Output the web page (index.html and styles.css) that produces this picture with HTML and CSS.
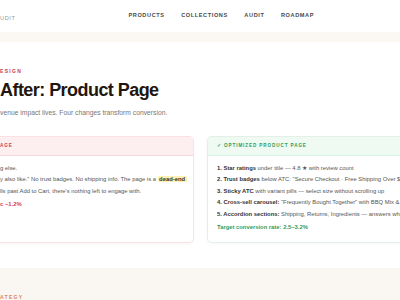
FILE: index.html
```html
<!DOCTYPE html>
<html lang="en">
<head>
  <meta charset="UTF-8">
  <meta name="viewport" content="width=device-width, initial-scale=1.0">
  <title>Store Audit - After: Product Page</title>
  <link rel="stylesheet" href="styles.css">
</head>
<body>
  <nav class="nav">
    <span class="brand">UDIT</span>
    <div class="nav-links">
      <a href="#">Products</a>
      <a href="#">Collections</a>
      <a href="#">Audit</a>
      <a href="#">Roadmap</a>
    </div>
  </nav>
  <div class="nav-band"></div>

  <section class="hero">
    <div class="eyebrow">esign</div>
    <h1>After: Product Page</h1>
    <p class="lead">venue impact lives. Four changes transform conversion.</p>

    <div class="compare">
      <div class="card card-before">
        <div class="card-head">age</div>
        <div class="card-body">
          <span class="line">g else.</span>
          <span class="line">y also like." No trust badges. No shipping info. The page is a <mark>dead-end</mark></span>
          <span class="line">lls past Add to Cart, there's nothing left to engage with.</span>
          <span class="line result bad">c <b>−1.2%</b></span>
        </div>
      </div>

      <div class="card card-after">
        <div class="card-head">✓ Optimized product page</div>
        <div class="card-body">
          <span class="line"><b>1. Star ratings</b> under title — 4.8 ★ with review count</span>
          <span class="line"><b>2. Trust badges</b> below ATC: "Secure Checkout · Free Shipping Over $50 · Easy Returns"</span>
          <span class="line"><b>3. Sticky ATC</b> with variant pills — select size without scrolling up</span>
          <span class="line"><b>4. Cross-sell carousel:</b> "Frequently Bought Together" with BBQ Mix &amp; Seasoning Kit</span>
          <span class="line"><b>5. Accordion sections:</b> Shipping, Returns, Ingredients — answers when asked</span>
          <span class="line result good">Target conversion rate: 2.5–3.2%</span>
        </div>
      </div>
    </div>
  </section>

  <section class="next">
    <div class="eyebrow eyebrow-warm">ategy</div>
  </section>
</body>
</html>
```

FILE: styles.css
```css
html, body {
  overflow: hidden;
}
body {
  font-family: 'Liberation Sans', Arial, sans-serif;
  margin: 0;
  background-color: #fff;
  color: #555;
}
.nav {
  display: flex;
  align-items: center;
  height: 32px;
  background-color: #fff;
}
.brand {
  font-size: 5.6px;
  letter-spacing: 0.6px;
  color: #999;
  margin-top: 4px;
}
.nav-links {
  display: flex;
  gap: 16.5px;
  padding-left: 113px;
}
.nav-links a {
  font-size: 5.6px;
  font-weight: bold;
  letter-spacing: 0.6px;
  text-transform: uppercase;
  color: #4a4a4a;
  text-decoration: none;
  margin-top: -2px;
}
.nav-band {
  height: 10px;
  background-color: #fbf7f3;
}
.hero {
  padding: 25px 0 25px;
}
.eyebrow {
  font-size: 5px;
  line-height: 8px;
  font-weight: bold;
  letter-spacing: 1.3px;
  text-transform: uppercase;
  color: #c8414e;
}
.eyebrow-warm {
  color: #d9855a;
}
h1 {
  margin: 5px 0 0;
  font-size: 18px;
  line-height: 21.6px;
  letter-spacing: -0.55px;
  color: #22160f;
}
.lead {
  margin: 6.4px 0 0;
  font-size: 6.75px;
  line-height: 10px;
  color: #777;
}
.compare {
  display: grid;
  grid-template-columns: 194px 1fr;
  gap: 13px;
  margin-top: 18px;
}
.card {
  background-color: #fff;
  border: 1px solid #f0e6e4;
  border-radius: 5px;
  box-shadow: 0 1px 3px rgba(120, 90, 70, 0.05);
  overflow: hidden;
}
.card-before {
  border-left: none;
  border-radius: 0 5px 5px 0;
  border-color: #f9e1e4;
}
.card-after {
  border-right: none;
  border-radius: 5px 0 0 5px;
  border-color: #e3efe7;
  width: 260px;
}
.card-head {
  height: 18px;
  line-height: 18px;
  font-size: 4.6px;
  font-weight: bold;
  letter-spacing: 0.9px;
  text-transform: uppercase;
  white-space: nowrap;
}
.card-before .card-head {
  background-color: #fdeef0;
  border-bottom: 1px solid #f9d6db;
  color: #c8414e;
}
.card-after .card-head {
  background-color: #eefaf2;
  border-bottom: 1px solid #d9f1e1;
  color: #2f9a5d;
  padding-left: 9px;
}
.card-body {
  padding: 7px 9px 8px 0;
}
.card-after .card-body {
  padding-left: 9px;
  padding-right: 0;
}
.line {
  display: block;
  font-size: 5.85px;
  line-height: 11.5px;
  white-space: nowrap;
  color: #555;
}
.line b {
  color: #333;
}
mark {
  background-color: #fcf1b4;
  color: #3b3020;
  font-weight: bold;
  padding: 0 1.5px;
  border-radius: 1px;
}
.result {
  margin-top: 2px;
  font-weight: bold;
}
.bad {
  color: #d63b4a;
}
.bad b {
  color: #d63b4a;
}
.good {
  color: #2f9e5f;
}
.next {
  background-color: #faf6f2;
  padding-top: 25px;
  height: 60px;
}
```
